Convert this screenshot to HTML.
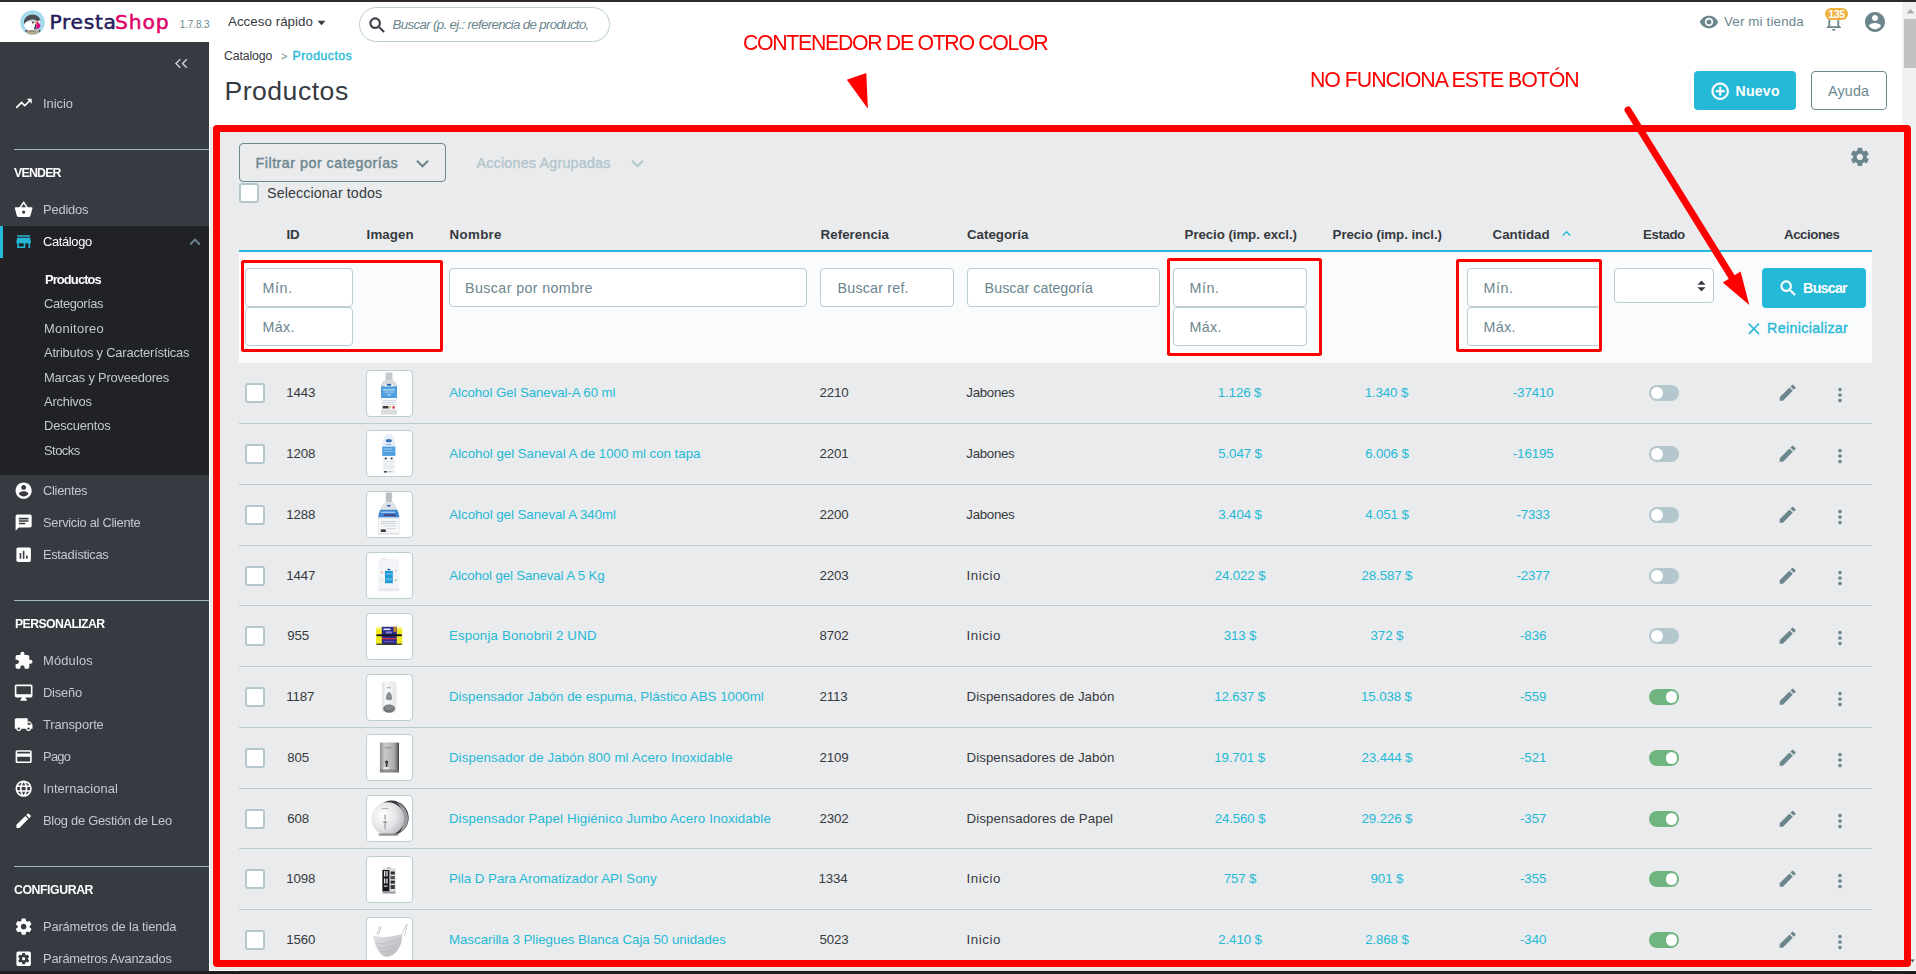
<!DOCTYPE html>
<html lang="es"><head><meta charset="utf-8"><title>Productos • PrestaShop</title>
<style>
html,body{margin:0;padding:0}
body{width:1916px;height:974px;overflow:hidden;position:relative;background:#fff;font-family:"Liberation Sans", sans-serif;}
#pg{position:absolute;left:0;top:0;width:1916px;height:974px;overflow:hidden}
#pg div,#pg svg,#pg span.t{position:absolute;box-sizing:border-box}
span.t{white-space:nowrap;line-height:1;}
</style></head>
<body><div id="pg">
<div style="left:1902px;top:2px;width:14px;height:968px;background:#f1f1f1"></div>
<svg style="left:1910px;top:959px" width="5" height="4" viewBox="0 0 5 4"><path fill="#505050" d="M0.5 0.5h4L2.500 3.500z"/></svg>
<div style="left:1904px;top:19px;width:12px;height:49px;background:#c1c1c1"></div>
<svg style="left:1906px;top:8px" width="9" height="6" viewBox="0 0 9 6"><path fill="#a9a9a9" d="M0.5 5.5L4.5 1L8.500 5.500z"/></svg>
<div style="left:0px;top:0px;width:1916px;height:2px;background:#2b2b2e"></div>
<div style="left:0px;top:971px;width:1916px;height:3px;background:#1d1d1e"></div>
<svg style="left:19.5px;top:9.5px" width="25" height="25" viewBox="0 0 25 25">
<defs><clipPath id="lc"><circle cx="12.400" cy="13" r="8.700"/></clipPath></defs>
<circle cx="12.500" cy="12.500" r="12.300" fill="#a4dcec"/>
<g clip-path="url(#lc)">
<path d="M3.500 14.500C3.500 7 8 4.200 12.500 4.200c4.500 0 7.500 2.800 8.200 6.300L17.500 11.500C15 8.500 9 8.500 4.500 14.500z" fill="#4b4f54"/>
<path d="M4.500 14.500C6 9.500 13 8.300 17.500 11.500L16 14z" fill="#c5c9cd"/>
<path d="M4.300 14C6 11.500 10 11 13 12c2 .700 3 2.500 2.500 4.500l-1 4.300H6C4.500 19 3.800 16.500 4.300 14z" fill="#fff"/>
<path d="M17.500 10.800l2.300-.600 1 2.300-1.500 1z" fill="#eceef0"/>
<circle cx="12.900" cy="12.600" r="0.850" fill="#111"/>
<path d="M15.800 10.500l.900.300-.400 3.900-.900-.300z" fill="#f5a623"/>
<path d="M15.400 14.300l.900.400-1 5-1.300-.400z" fill="#17181a"/>
<path d="M11 15.500l1.500 1.500-.500.500z" fill="#9aa0a6"/>
<polygon points="16.900,11 21.900,17 16.200,19.600" fill="#e5007d"/>
</g>
<path d="M5.200 21.300C7 20 18 20 20 21.300c-1 1.800-4 3.200-7.400 3.200s-6.400-1.400-7.400-3.200z" fill="#b8a88c"/>
<path d="M5 21l1.800-1.800 1 1.300-1.500 1.700zM18.300 20.300l1.500-.800.800 1.800-1.500.900z" fill="#55585c"/>
<rect x="9" y="20.700" width="5.500" height="0.700" fill="#55585c"/>
</svg>
<span class="t" style="left:49.60px;top:12px;font-size:20.3px;color:#251b5b;letter-spacing:0.628px;font-family:'DejaVu Sans',sans-serif;-webkit-text-stroke:0.5px #251b5b;">Presta</span>
<span class="t" style="left:115.00px;top:12px;font-size:20.3px;color:#df0067;letter-spacing:0.888px;font-family:'DejaVu Sans',sans-serif;-webkit-text-stroke:0.5px #df0067;">Shop</span>
<span class="t" style="left:179.70px;top:20px;font-size:10px;color:#6c868e;letter-spacing:-0.120px;">1.7.8.3</span>
<span class="t" style="left:228.00px;top:15px;font-size:13.3px;color:#363a41;letter-spacing:0.053px;">Acceso rápido</span>
<svg style="left:317px;top:20px" width="9" height="6" viewBox="0 0 9 6"><path fill="#363a41" d="M0.5 0.8h8L4.500 5.200z"/></svg>
<div style="left:359px;top:7px;width:251px;height:35px;border:1px solid #bbcdd2;border-radius:18px;background:#fff"></div>
<svg style="left:367.4px;top:14.9px" width="20.6" height="20.6" viewBox="0 0 24 24"><path fill="#363a41" stroke="#363a41" stroke-width="0.4" d="M15.500 14h-.790l-.280-.270C15.410 12.590 16 11.110 16 9.500 16 5.910 13.090 3 9.500 3S3 5.910 3 9.500 5.910 16 9.500 16c1.610 0 3.090-.590 4.230-1.570l.270.280v.790l5 4.990L20.490 19l-4.990-5zm-6 0C7.010 14 5 11.990 5 9.500S7.010 5 9.500 5 14 7.010 14 9.500 11.990 14 9.500 14z"/></svg>
<span class="t" style="left:392.60px;top:18px;font-size:13.3px;color:#6c868e;font-style:italic;letter-spacing:-0.678px;">Buscar (p. ej.: referencia de producto,</span>
<svg style="left:1699.2px;top:12px" width="20" height="20" viewBox="0 0 24 24"><path fill="#6c868e" d="M12 4.500C7 4.500 2.730 7.610 1 12c1.730 4.390 6 7.500 11 7.500s9.270-3.110 11-7.500c-1.730-4.390-6-7.500-11-7.500zM12 17c-2.760 0-5-2.240-5-5s2.240-5 5-5 5 2.240 5 5-2.240 5-5 5zm0-8c-1.660 0-3 1.340-3 3s1.340 3 3 3 3-1.340 3-3-1.340-3-3-3z"/></svg>
<span class="t" style="left:1724.00px;top:15px;font-size:13.3px;color:#6c868e;letter-spacing:0.174px;">Ver mi tienda</span>
<svg style="left:1823px;top:11.2px" width="21.6" height="21.6" viewBox="0 0 24 24"><path fill="#6c868e" d="M12 22c1.100 0 2-.900 2-2h-4c0 1.100.900 2 2 2zm6-6v-5c0-3.070-1.630-5.640-4.500-6.320V4c0-.830-.670-1.500-1.500-1.500s-1.500.670-1.500 1.500v.680C7.640 5.360 6 7.920 6 11v5l-2 2v1h16v-1l-2-2zm-2 1H8v-6c0-2.480 1.510-4.500 4-4.500s4 2.020 4 4.500v6z"/></svg>
<div style="left:1825px;top:8px;width:23px;height:11.5px;background:#efb03e;border-radius:6px"></div>
<span class="t" style="left:1828.25px;top:9px;font-size:10.8px;color:#fff;font-weight:700;letter-spacing:-0.550px;">135</span>
<svg style="left:1863px;top:9.8px" width="24" height="24" viewBox="0 0 24 24"><path fill="#6c868e" d="M12 2C6.48 2 2 6.48 2 12s4.48 10 10 10 10-4.48 10-10S17.52 2 12 2zm0 3c1.66 0 3 1.34 3 3s-1.34 3-3 3-3-1.34-3-3 1.34-3 3-3zm0 14.2c-2.5 0-4.71-1.28-6-3.22.03-1.99 4-3.08 6-3.08 1.99 0 5.97 1.09 6 3.08-1.29 1.94-3.5 3.22-6 3.22z"/></svg>
<span class="t" style="left:224.00px;top:50px;font-size:12.3px;color:#363a41;letter-spacing:-0.126px;">Catalogo</span>
<span class="t" style="left:281.00px;top:51px;font-size:11px;color:#6c868e;">&gt;</span>
<span class="t" style="left:292.60px;top:50px;font-size:12.3px;color:#25b9d7;letter-spacing:0.473px;-webkit-text-stroke:0.35px #25b9d7;">Productos</span>
<span class="t" style="left:224.40px;top:78px;font-size:26.6px;color:#363a41;letter-spacing:0.508px;">Productos</span>
<div style="left:1694px;top:71px;width:102px;height:39px;background:#25b9d7;border-radius:4px"></div>
<svg style="left:1710.3px;top:80.5px" width="20.4" height="20.4" viewBox="0 0 24 24"><path fill="#fff" stroke="#fff" stroke-width="0.6" d="M13 7h-2v4H7v2h4v4h2v-4h4v-2h-4V7zm-1-5C6.480 2 2 6.480 2 12s4.480 10 10 10 10-4.480 10-10S17.520 2 12 2zm0 18c-4.410 0-8-3.590-8-8s3.590-8 8-8 8 3.590 8 8-3.590 8-8 8z"/></svg>
<span class="t" style="left:1735.60px;top:84px;font-size:14px;color:#fff;font-weight:700;letter-spacing:0.266px;">Nuevo</span>
<div style="left:1811px;top:71px;width:76px;height:39px;border:1px solid #6c868e;border-radius:4px;background:#fff"></div>
<span class="t" style="left:1828.00px;top:84px;font-size:14.3px;color:#6c868e;letter-spacing:0.168px;">Ayuda</span>
<div style="left:0px;top:42px;width:209px;height:929px;background:#363a41"></div>
<div style="left:0px;top:226px;width:209px;height:249px;background:#202226"></div>
<div style="left:0px;top:226px;width:3px;height:32px;background:#25b9d7"></div>
<svg style="left:174px;top:58px" width="15" height="11" viewBox="0 0 15 11"><path d="M6.300 1.200L2 5.500l4.300 4.300M12.800 1.200L8.500 5.500l4.300 4.300" fill="none" stroke="#c9ced2" stroke-width="1.500"/></svg>
<div style="left:14px;top:149px;width:195px;height:1px;background:#a3b7be"></div>
<div style="left:14px;top:600px;width:195px;height:1px;background:#a3b7be"></div>
<div style="left:14px;top:866px;width:195px;height:1px;background:#a3b7be"></div>
<svg style="left:14px;top:93.85px" width="19.3" height="19.3" viewBox="0 0 24 24"><path fill="#fff" d="M16 6l2.29 2.29-4.88 4.88-4-4L2 16.59 3.41 18l6-6 4 4 6.3-6.29L22 12V6z"/></svg>
<span class="t" style="left:43.00px;top:98px;font-size:12.9px;color:#c3c9ce;letter-spacing:-0.025px;will-change:transform;">Inicio</span>
<span class="t" style="left:14.00px;top:167px;font-size:12.3px;color:#fff;font-weight:700;letter-spacing:-0.753px;will-change:transform;">VENDER</span>
<svg style="left:14px;top:199.74999999999997px" width="19.3" height="19.3" viewBox="0 0 24 24"><path fill="#fff" d="M17.21 9l-4.38-6.56c-.19-.28-.51-.42-.83-.42-.32 0-.64.14-.83.43L6.79 9H2c-.55 0-1 .45-1 1 0 .09.01.18.04.27l2.54 9.27c.23.84 1 1.46 1.92 1.46h13c.92 0 1.69-.62 1.93-1.46l2.54-9.27L23 10c0-.55-.45-1-1-1h-4.79zM9 9l3-4.4L15 9H9zm3 8c-1.1 0-2-.9-2-2s.9-2 2-2 2 .9 2 2-.9 2-2 2z"/></svg>
<span class="t" style="left:43.00px;top:204px;font-size:12.9px;color:#c3c9ce;letter-spacing:-0.173px;will-change:transform;">Pedidos</span>
<svg style="left:14px;top:231.85px" width="19.3" height="19.3" viewBox="0 0 24 24"><path fill="#25b9d7" d="M20 4H4v2h16V4zm1 10v-2l-1-5H4l-1 5v2h1v6h10v-6h4v6h2v-6h1zm-9 4H6v-4h6v4z"/></svg>
<span class="t" style="left:43.40px;top:236px;font-size:12.9px;color:#fff;letter-spacing:-0.347px;will-change:transform;">Catálogo</span>
<svg style="left:183.5px;top:231px" width="22" height="22" viewBox="0 0 24 24"><path fill="#6c868e" d="M7.410 15.410L12 10.830l4.590 4.580L18 14l-6-6-6 6z"/></svg>
<span class="t" style="left:44.50px;top:274px;font-size:12.9px;color:#fff;font-weight:700;letter-spacing:-0.872px;will-change:transform;">Productos</span>
<span class="t" style="left:43.90px;top:298px;font-size:12.9px;color:#c3c9ce;letter-spacing:-0.390px;will-change:transform;">Categorías</span>
<span class="t" style="left:43.50px;top:323px;font-size:12.9px;color:#c3c9ce;letter-spacing:0.281px;will-change:transform;">Monitoreo</span>
<span class="t" style="left:43.90px;top:347px;font-size:12.9px;color:#c3c9ce;letter-spacing:-0.188px;will-change:transform;">Atributos y Características</span>
<span class="t" style="left:43.50px;top:372px;font-size:12.9px;color:#c3c9ce;letter-spacing:-0.201px;will-change:transform;">Marcas y Proveedores</span>
<span class="t" style="left:43.90px;top:396px;font-size:12.9px;color:#c3c9ce;letter-spacing:-0.212px;will-change:transform;">Archivos</span>
<span class="t" style="left:43.50px;top:420px;font-size:12.9px;color:#c3c9ce;letter-spacing:-0.147px;will-change:transform;">Descuentos</span>
<span class="t" style="left:43.90px;top:445px;font-size:12.9px;color:#c3c9ce;letter-spacing:-0.508px;will-change:transform;">Stocks</span>
<svg style="left:14px;top:480.65000000000003px" width="19.3" height="19.3" viewBox="0 0 24 24"><path fill="#fff" d="M12 2C6.48 2 2 6.48 2 12s4.48 10 10 10 10-4.48 10-10S17.52 2 12 2zm0 3c1.66 0 3 1.34 3 3s-1.34 3-3 3-3-1.34-3-3 1.34-3 3-3zm0 14.2c-2.5 0-4.71-1.28-6-3.22.03-1.99 4-3.08 6-3.08 1.99 0 5.97 1.09 6 3.08-1.29 1.94-3.5 3.22-6 3.22z"/></svg>
<span class="t" style="left:43.40px;top:485px;font-size:12.9px;color:#c3c9ce;letter-spacing:-0.289px;will-change:transform;">Clientes</span>
<svg style="left:14px;top:512.7500000000001px" width="19.3" height="19.3" viewBox="0 0 24 24"><path fill="#fff" d="M20 2H4c-1.1 0-1.99.9-1.99 2L2 22l4-4h14c1.1 0 2-.9 2-2V4c0-1.1-.9-2-2-2zM6 9h12v2H6V9zm8 5H6v-2h8v2zm4-6H6V6h12v2z"/></svg>
<span class="t" style="left:43.40px;top:517px;font-size:12.9px;color:#c3c9ce;letter-spacing:-0.300px;will-change:transform;">Servicio al Cliente</span>
<svg style="left:14px;top:544.7500000000001px" width="19.3" height="19.3" viewBox="0 0 24 24"><path fill="#fff" d="M19 3H5c-1.1 0-2 .9-2 2v14c0 1.1.9 2 2 2h14c1.1 0 2-.9 2-2V5c0-1.1-.9-2-2-2zM9 17H7v-7h2v7zm4 0h-2V7h2v10zm4 0h-2v-4h2v4z"/></svg>
<span class="t" style="left:43.00px;top:549px;font-size:12.9px;color:#c3c9ce;letter-spacing:-0.341px;will-change:transform;">Estadísticas</span>
<span class="t" style="left:14.60px;top:618px;font-size:12.3px;color:#fff;font-weight:700;letter-spacing:-0.630px;will-change:transform;">PERSONALIZAR</span>
<svg style="left:14px;top:650.7500000000001px" width="19.3" height="19.3" viewBox="0 0 24 24"><path fill="#fff" d="M20.5 11H19V7c0-1.1-.9-2-2-2h-4V3.500C13 2.120 11.880 1 10.500 1S8 2.120 8 3.500V5H4c-1.100 0-1.990.900-1.990 2v3.800H3.500c1.490 0 2.700 1.210 2.700 2.700s-1.210 2.700-2.700 2.700H2V20c0 1.100.900 2 2 2h3.800v-1.500c0-1.490 1.210-2.700 2.700-2.700 1.490 0 2.700 1.210 2.700 2.700V22H17c1.100 0 2-.900 2-2v-4h1.500c1.380 0 2.500-1.120 2.500-2.500S21.880 11 20.500 11z"/></svg>
<span class="t" style="left:43.00px;top:655px;font-size:12.9px;color:#c3c9ce;letter-spacing:0.170px;will-change:transform;">Módulos</span>
<svg style="left:14px;top:682.7500000000001px" width="19.3" height="19.3" viewBox="0 0 24 24"><path fill="#fff" d="M21 2H3c-1.100 0-2 .900-2 2v12c0 1.100.900 2 2 2h7l-2 3v1h8v-1l-2-3h7c1.100 0 2-.900 2-2V4c0-1.100-.900-2-2-2zm0 12H3V4h18v10z"/></svg>
<span class="t" style="left:43.00px;top:687px;font-size:12.9px;color:#c3c9ce;letter-spacing:-0.211px;will-change:transform;">Diseño</span>
<svg style="left:14px;top:714.7500000000001px" width="19.3" height="19.3" viewBox="0 0 24 24"><path fill="#fff" d="M20 8h-3V4H3c-1.100 0-2 .900-2 2v11h2c0 1.660 1.340 3 3 3s3-1.340 3-3h6c0 1.660 1.340 3 3 3s3-1.340 3-3h2v-5l-3-4zM6 18.500c-.830 0-1.500-.670-1.500-1.500s.670-1.500 1.500-1.500 1.500.670 1.500 1.500-.670 1.500-1.500 1.500zm13.500-9l1.960 2.500H17V9.500h2.500zm-1.500 9c-.830 0-1.500-.670-1.500-1.500s.670-1.500 1.500-1.500 1.500.670 1.500 1.500-.670 1.500-1.500 1.500z"/></svg>
<span class="t" style="left:43.40px;top:719px;font-size:12.9px;color:#c3c9ce;letter-spacing:-0.120px;will-change:transform;">Transporte</span>
<svg style="left:14px;top:746.7500000000001px" width="19.3" height="19.3" viewBox="0 0 24 24"><path fill="#fff" d="M20 4H4c-1.110 0-1.990.890-1.990 2L2 18c0 1.110.890 2 2 2h16c1.110 0 2-.890 2-2V6c0-1.110-.890-2-2-2zm0 14H4v-6h16v6zm0-10H4V6h16v2z"/></svg>
<span class="t" style="left:43.00px;top:751px;font-size:12.9px;color:#c3c9ce;letter-spacing:-0.712px;will-change:transform;">Pago</span>
<svg style="left:14px;top:778.7500000000001px" width="19.3" height="19.3" viewBox="0 0 24 24"><path fill="#fff" d="M11.990 2C6.470 2 2 6.480 2 12s4.470 10 9.990 10C17.520 22 22 17.520 22 12S17.520 2 11.990 2zm6.930 6h-2.950c-.320-1.250-.780-2.450-1.380-3.560 1.840.630 3.370 1.910 4.330 3.560zM12 4.040c.830 1.200 1.480 2.530 1.910 3.960h-3.820c.430-1.430 1.080-2.760 1.910-3.960zM4.260 14C4.100 13.360 4 12.690 4 12s.100-1.360.260-2h3.380c-.080.660-.140 1.320-.140 2 0 .680.060 1.340.140 2H4.260zm.820 2h2.950c.320 1.250.780 2.450 1.380 3.560-1.840-.630-3.370-1.900-4.330-3.560zm2.950-8H5.080c.960-1.660 2.490-2.930 4.330-3.560C8.810 5.550 8.350 6.750 8.030 8zM12 19.960c-.830-1.200-1.480-2.530-1.910-3.960h3.820c-.430 1.430-1.080 2.760-1.910 3.960zM14.340 14H9.660c-.090-.660-.160-1.320-.160-2 0-.680.070-1.350.160-2h4.680c.090.650.160 1.320.160 2 0 .680-.070 1.340-.160 2zm.250 5.560c.600-1.110 1.060-2.310 1.380-3.560h2.950c-.960 1.650-2.490 2.930-4.330 3.560zM16.360 14c.080-.660.140-1.320.140-2 0-.680-.060-1.340-.140-2h3.380c.160.640.260 1.310.260 2s-.100 1.360-.260 2h-3.380z"/></svg>
<span class="t" style="left:43.00px;top:783px;font-size:12.9px;color:#c3c9ce;letter-spacing:0.079px;will-change:transform;">Internacional</span>
<svg style="left:14px;top:810.7500000000001px" width="19.3" height="19.3" viewBox="0 0 24 24"><path fill="#fff" d="M3 17.250V21h3.750L17.810 9.940l-3.750-3.750L3 17.250zM20.710 7.040c.390-.390.390-1.020 0-1.410l-2.340-2.340c-.390-.390-1.020-.390-1.410 0l-1.830 1.830 3.750 3.750 1.830-1.830z"/></svg>
<span class="t" style="left:43.00px;top:815px;font-size:12.9px;color:#c3c9ce;letter-spacing:-0.270px;will-change:transform;">Blog de Gestión de Leo</span>
<span class="t" style="left:14.00px;top:884px;font-size:12.3px;color:#fff;font-weight:700;letter-spacing:-0.429px;will-change:transform;">CONFIGURAR</span>
<svg style="left:14px;top:916.7500000000001px" width="19.3" height="19.3" viewBox="0 0 24 24"><path fill="#fff" d="M19.430 12.980c.040-.320.070-.640.070-.980s-.030-.660-.070-.980l2.110-1.650c.190-.150.240-.420.120-.640l-2-3.460c-.120-.220-.390-.300-.610-.220l-2.490 1c-.520-.400-1.080-.730-1.690-.980l-.380-2.650C14.460 2.180 14.250 2 14 2h-4c-.250 0-.460.180-.490.420l-.380 2.650c-.610.250-1.170.590-1.690.980l-2.490-1c-.230-.090-.490 0-.610.220l-2 3.460c-.130.220-.070.490.120.640l2.110 1.650c-.040.320-.070.650-.070.980s.030.660.070.980l-2.110 1.650c-.190.150-.240.420-.120.640l2 3.460c.120.220.390.300.610.220l2.490-1c.520.400 1.080.730 1.690.980l.380 2.650c.030.240.240.420.490.420h4c.250 0 .460-.180.490-.420l.380-2.650c.610-.250 1.170-.590 1.690-.980l2.490 1c.230.090.490 0 .610-.220l2-3.460c.120-.220.070-.490-.120-.640l-2.110-1.650zM12 15.500c-1.930 0-3.500-1.570-3.500-3.500s1.570-3.500 3.500-3.500 3.500 1.570 3.500 3.500-1.570 3.500-3.500 3.500z"/></svg>
<span class="t" style="left:43.00px;top:921px;font-size:12.9px;color:#c3c9ce;letter-spacing:-0.154px;will-change:transform;">Parámetros de la tienda</span>
<svg style="left:14px;top:948.7500000000001px" width="19.3" height="19.3" viewBox="0 0 24 24"><path fill="#fff" d="M12 10c-1.100 0-2 .900-2 2s.900 2 2 2 2-.900 2-2-.900-2-2-2zm7-7H5c-1.110 0-2 .900-2 2v14c0 1.100.890 2 2 2h14c1.110 0 2-.900 2-2V5c0-1.100-.890-2-2-2zm-1.750 9c0 .230-.020.460-.050.680l1.480 1.160c.130.110.170.300.080.450l-1.400 2.420c-.090.150-.270.210-.430.150l-1.740-.700c-.360.280-.760.510-1.180.690l-.260 1.850c-.030.170-.180.300-.350.300h-2.800c-.170 0-.320-.130-.350-.290l-.260-1.850c-.430-.180-.820-.410-1.180-.690l-1.740.700c-.160.060-.340 0-.430-.150l-1.400-2.420c-.090-.150-.050-.340.080-.450l1.480-1.160c-.030-.230-.050-.460-.050-.690 0-.230.020-.460.050-.680l-1.480-1.160c-.130-.110-.170-.300-.080-.450l1.400-2.420c.090-.150.270-.210.430-.150l1.740.700c.360-.280.760-.510 1.180-.690l.260-1.850c.030-.170.180-.300.350-.300h2.800c.170 0 .320.130.350.290l.260 1.850c.430.180.820.410 1.180.690l1.740-.700c.160-.060.340 0 .430.150l1.400 2.420c.090.150.050.340-.080.450l-1.480 1.160c.030.230.050.460.050.690z"/></svg>
<span class="t" style="left:43.00px;top:953px;font-size:12.9px;color:#c3c9ce;letter-spacing:-0.221px;will-change:transform;">Parámetros Avanzados</span>
<div style="left:210px;top:127px;width:1692px;height:843px;background:#eaebec"></div>
<div style="left:209px;top:970px;width:1707px;height:1px;background:#fff"></div>
<div style="left:239px;top:970px;width:1633px;height:1px;background:#d3e1e6"></div>
<div style="left:213px;top:125px;width:1698px;height:842px;background:#eaebec;border-radius:4px"></div>
<div style="left:239px;top:143px;width:207px;height:38.5px;border:1px solid #6c868e;border-radius:4px"></div>
<span class="t" style="left:255.60px;top:156px;font-size:14.3px;color:#6c868e;letter-spacing:0.488px;-webkit-text-stroke:0.4px #6c868e;">Filtrar por categorías</span>
<svg style="left:410.3px;top:151.1px" width="25" height="25" viewBox="0 0 24 24"><path fill="#6c868e" d="M7.410 8.590L12 13.170l4.590-4.580L18 10l-6 6-6-6 1.410-1.410z"/></svg>
<span class="t" style="left:476.50px;top:156px;font-size:14.3px;color:#b3c7cd;letter-spacing:0.207px;-webkit-text-stroke:0.4px #b3c7cd;">Acciones Agrupadas</span>
<svg style="left:624.8px;top:151.1px" width="25" height="25" viewBox="0 0 24 24"><path fill="#b3c7cd" d="M7.410 8.590L12 13.170l4.590-4.580L18 10l-6 6-6-6 1.410-1.410z"/></svg>
<svg style="left:1848.9px;top:146.1px" width="21.8" height="21.8" viewBox="0 0 24 24"><path fill="#6c868e" d="M19.430 12.980c.040-.320.070-.640.070-.980s-.030-.660-.070-.980l2.110-1.650c.190-.150.240-.420.120-.640l-2-3.460c-.120-.220-.390-.300-.610-.220l-2.490 1c-.520-.400-1.080-.730-1.690-.980l-.380-2.650C14.460 2.180 14.250 2 14 2h-4c-.250 0-.460.180-.490.420l-.380 2.650c-.610.250-1.170.590-1.690.980l-2.490-1c-.230-.090-.490 0-.610.220l-2 3.460c-.130.220-.070.490.120.640l2.110 1.650c-.040.320-.070.650-.070.980s.030.660.070.980l-2.110 1.650c-.190.150-.240.420-.120.640l2 3.460c.120.220.390.300.610.220l2.490-1c.520.400 1.080.730 1.690.980l.380 2.650c.030.240.240.420.490.420h4c.250 0 .460-.180.490-.420l.380-2.650c.610-.250 1.170-.590 1.690-.980l2.490 1c.230.090.490 0 .610-.220l2-3.460c.120-.220.070-.490-.120-.640l-2.110-1.650zM12 15.500c-1.930 0-3.500-1.570-3.500-3.500s1.570-3.500 3.500-3.500 3.500 1.570 3.500 3.500-1.570 3.500-3.500 3.500z"/></svg>
<div style="left:239px;top:182.5px;width:20px;height:20px;border:2px solid #b3c7cd;border-radius:3px;background:#fff"></div>
<span class="t" style="left:267.00px;top:186px;font-size:14.3px;color:#363a41;letter-spacing:0.094px;">Seleccionar todos</span>
<span class="t" style="left:286.60px;top:228px;font-size:13.3px;color:#363a41;font-weight:700;letter-spacing:-0.194px;">ID</span>
<span class="t" style="left:366.60px;top:228px;font-size:13.3px;color:#363a41;font-weight:700;letter-spacing:0.114px;">Imagen</span>
<span class="t" style="left:449.60px;top:228px;font-size:13.3px;color:#363a41;font-weight:700;letter-spacing:0.331px;">Nombre</span>
<span class="t" style="left:820.60px;top:228px;font-size:13.3px;color:#363a41;font-weight:700;letter-spacing:0.044px;">Referencia</span>
<span class="t" style="left:967.00px;top:228px;font-size:13.3px;color:#363a41;font-weight:700;letter-spacing:0.008px;">Categoría</span>
<span class="t" style="left:1184.60px;top:228px;font-size:13.3px;color:#363a41;font-weight:700;letter-spacing:-0.076px;">Precio (imp. excl.)</span>
<span class="t" style="left:1332.60px;top:228px;font-size:13.3px;color:#363a41;font-weight:700;letter-spacing:-0.078px;">Precio (imp. incl.)</span>
<span class="t" style="left:1492.50px;top:228px;font-size:13.3px;color:#363a41;font-weight:700;letter-spacing:0.034px;">Cantidad</span>
<span class="t" style="left:1643.10px;top:228px;font-size:13.3px;color:#363a41;font-weight:700;letter-spacing:-0.442px;">Estado</span>
<span class="t" style="left:1784.00px;top:228px;font-size:13.3px;color:#363a41;font-weight:700;letter-spacing:-0.461px;">Acciones</span>
<svg style="left:1557.7px;top:225.3px" width="17" height="17" viewBox="0 0 24 24"><path fill="#25b9d7" d="M7.410 15.410L12 10.830l4.590 4.580L18 14l-6-6-6 6z"/></svg>
<div style="left:239px;top:250px;width:1633px;height:2px;background:#25b9d7"></div>
<div style="left:239px;top:252px;width:1633px;height:111px;background:#fafbfc"></div>
<div style="left:245px;top:268px;width:108px;height:39px;border:1px solid #bbcdd2;border-radius:4px;background:#fff"></div>
<span class="t" style="left:262.60px;top:281px;font-size:14.3px;color:#6c868e;letter-spacing:0.556px;">Mín.</span>
<div style="left:245px;top:307px;width:108px;height:39px;border:1px solid #bbcdd2;border-radius:4px;background:#fff"></div>
<span class="t" style="left:262.60px;top:320px;font-size:14.3px;color:#6c868e;letter-spacing:0.330px;">Máx.</span>
<div style="left:449px;top:268px;width:357.5px;height:39px;border:1px solid #bbcdd2;border-radius:4px;background:#fff"></div>
<span class="t" style="left:465.10px;top:281px;font-size:14.3px;color:#6c868e;letter-spacing:0.367px;">Buscar por nombre</span>
<div style="left:820px;top:268px;width:134px;height:39px;border:1px solid #bbcdd2;border-radius:4px;background:#fff"></div>
<span class="t" style="left:837.60px;top:281px;font-size:14.3px;color:#6c868e;letter-spacing:0.185px;">Buscar ref.</span>
<div style="left:967px;top:268px;width:193px;height:39px;border:1px solid #bbcdd2;border-radius:4px;background:#fff"></div>
<span class="t" style="left:984.60px;top:281px;font-size:14.3px;color:#6c868e;letter-spacing:0.025px;">Buscar categoría</span>
<div style="left:1173px;top:268px;width:134px;height:39px;border:1px solid #bbcdd2;border-radius:4px;background:#fff"></div>
<span class="t" style="left:1189.60px;top:281px;font-size:14.3px;color:#6c868e;letter-spacing:0.556px;">Mín.</span>
<div style="left:1173px;top:307px;width:134px;height:39px;border:1px solid #bbcdd2;border-radius:4px;background:#fff"></div>
<span class="t" style="left:1189.60px;top:320px;font-size:14.3px;color:#6c868e;letter-spacing:0.330px;">Máx.</span>
<div style="left:1467px;top:268px;width:134px;height:39px;border:1px solid #bbcdd2;border-radius:4px;background:#fff"></div>
<span class="t" style="left:1483.60px;top:281px;font-size:14.3px;color:#6c868e;letter-spacing:0.556px;">Mín.</span>
<div style="left:1467px;top:307px;width:134px;height:39px;border:1px solid #bbcdd2;border-radius:4px;background:#fff"></div>
<span class="t" style="left:1483.60px;top:320px;font-size:14.3px;color:#6c868e;letter-spacing:0.330px;">Máx.</span>
<div style="left:1614px;top:268px;width:99.5px;height:34.5px;border:1px solid #bbcdd2;border-radius:4px;background:#fff"></div>
<svg style="left:1697px;top:280px" width="9" height="12" viewBox="0 0 9 12"><path fill="#363a41" d="M0.500 4.800L4.500 0.500l4 4.300zM0.500 7.200L4.500 11.500l4-4.300z"/></svg>
<div style="left:1762px;top:268px;width:104px;height:39.5px;background:#25b9d7;border-radius:4px"></div>
<svg style="left:1777.9px;top:278.1px" width="20.6" height="20.6" viewBox="0 0 24 24"><path fill="#fff" stroke="#fff" stroke-width="0.5" d="M15.500 14h-.790l-.280-.270C15.410 12.590 16 11.110 16 9.500 16 5.910 13.090 3 9.500 3S3 5.910 3 9.500 5.910 16 9.500 16c1.610 0 3.090-.590 4.230-1.570l.270.280v.790l5 4.990L20.490 19l-4.990-5zm-6 0C7.010 14 5 11.990 5 9.500S7.010 5 9.500 5 14 7.010 14 9.500 11.990 14 9.500 14z"/></svg>
<span class="t" style="left:1803.10px;top:281px;font-size:14.3px;color:#fff;font-weight:700;letter-spacing:-0.782px;">Buscar</span>
<svg style="left:1744.1px;top:319.1px" width="19.7" height="19.7" viewBox="0 0 24 24"><path fill="#25b9d7" d="M19 6.410L17.590 5 12 10.590 6.410 5 5 6.410 10.590 12 5 17.590 6.410 19 12 13.410 17.590 19 19 17.590 13.410 12z"/></svg>
<span class="t" style="left:1767.10px;top:321px;font-size:14.3px;color:#25b9d7;letter-spacing:0.308px;-webkit-text-stroke:0.35px #25b9d7;">Reinicializar</span>
<div style="left:239px;top:423px;width:1633px;height:1px;background:#bbcdd2"></div>
<div style="left:245px;top:383px;width:19.5px;height:19.5px;border:2px solid #b3c7cd;border-radius:3px;background:#fff"></div>
<span class="t" style="left:286.20px;top:386px;font-size:13.3px;color:#363a41;letter-spacing:-0.120px;">1443</span>
<div style="left:366px;top:370px;width:47px;height:47px;border:1px solid #bbcdd2;border-radius:4px;background:#fff;overflow:hidden"><svg style="left:0;top:0" width="45" height="45" viewBox="0 0 45 45"><rect x="18.500" y="1.500" width="7" height="8.500" rx="0.800" fill="#c6c9cc"/>
<path d="M14 43.400V16c0-4 2.500-6.500 5-6.900h6c2.500.400 5 2.900 5 6.900v27.400z" fill="#d8dadc"/>
<rect x="14" y="15.300" width="16" height="11.700" fill="#4d9ede"/>
<path d="M17 15.300c1.500-3.300 8.500-3.300 10 0z" fill="#fff"/><ellipse cx="22" cy="13.800" rx="2.600" ry="1.100" fill="#2f66b3"/>
<rect x="16" y="18.200" width="12" height="1.200" fill="#c4def4"/><rect x="16.500" y="20.600" width="11" height="0.900" fill="#b0d3f0"/><rect x="20" y="23" width="4" height="1.600" fill="#9fc9ee"/>
<rect x="14" y="27" width="16" height="11.700" fill="#f4f6f8"/>
<rect x="15.500" y="29" width="13" height="0.700" fill="#c8ccd0"/><rect x="15.500" y="31" width="13" height="0.700" fill="#c8ccd0"/><rect x="15.500" y="33" width="13" height="0.700" fill="#d0d4d8"/>
<rect x="15.700" y="35" width="5.800" height="2.500" fill="#3a3a3e"/><rect x="22.400" y="35.300" width="1.500" height="2" fill="#d8b53a"/><circle cx="26.600" cy="36.400" r="1.300" fill="#e0404a"/></svg></div>
<span class="t" style="left:449.30px;top:386px;font-size:13.3px;color:#25b9d7;letter-spacing:-0.088px;">Alcohol Gel Saneval-A 60 ml</span>
<span class="t" style="left:819.50px;top:386px;font-size:13.3px;color:#363a41;letter-spacing:-0.120px;">2210</span>
<span class="t" style="left:966.30px;top:386px;font-size:13.3px;color:#363a41;letter-spacing:-0.304px;">Jabones</span>
<span class="t" style="left:1217.78px;top:386px;font-size:13.3px;color:#25b9d7;letter-spacing:-0.120px;">1.126 $</span>
<span class="t" style="left:1364.68px;top:386px;font-size:13.3px;color:#25b9d7;letter-spacing:-0.120px;">1.340 $</span>
<span class="t" style="left:1512.80px;top:386px;font-size:13.3px;color:#25b9d7;letter-spacing:-0.120px;">-37410</span>
<div style="left:1649px;top:385px;width:30px;height:15.5px;background:#b3c7cd;border-radius:8px"></div>
<div style="left:1651px;top:387px;width:11.5px;height:11.5px;background:#fff;border-radius:6px"></div>
<svg style="left:1777.2px;top:381.6px" width="21.3" height="21.3" viewBox="0 0 24 24"><path fill="#6c868e" d="M3 17.250V21h3.750L17.810 9.940l-3.750-3.750L3 17.250zM20.710 7.040c.390-.390.390-1.020 0-1.410l-2.340-2.340c-.390-.390-1.020-.390-1.410 0l-1.830 1.830 3.750 3.750 1.830-1.830z"/></svg>
<svg style="left:1829.3px;top:383.8px" width="22" height="22" viewBox="0 0 24 24"><path fill="#6c868e" d="M12 8c1.100 0 2-.900 2-2s-.900-2-2-2-2 .900-2 2 .900 2 2 2zm0 2c-1.100 0-2 .900-2 2s.900 2 2 2 2-.900 2-2-.900-2-2-2zm0 6c-1.100 0-2 .900-2 2s.900 2 2 2 2-.900 2-2-.900-2-2-2z"/></svg>
<div style="left:239px;top:484px;width:1633px;height:1px;background:#bbcdd2"></div>
<div style="left:245px;top:444px;width:19.5px;height:19.5px;border:2px solid #b3c7cd;border-radius:3px;background:#fff"></div>
<span class="t" style="left:286.20px;top:447px;font-size:13.3px;color:#363a41;letter-spacing:-0.120px;">1208</span>
<div style="left:366px;top:430px;width:47px;height:47px;border:1px solid #bbcdd2;border-radius:4px;background:#fff;overflow:hidden"><svg style="left:0;top:0" width="45" height="45" viewBox="0 0 45 45"><path d="M15 43.400V14c0-5 2-9 4.500-10.700h4.600c2.500 1.700 4.500 5.700 4.500 10.700v29.400z" fill="#f6f8fb"/>
<path d="M15.300 15.600c0-5 2-10 4.200-12h4.600c2.200 2 4.200 7 4.200 12z" fill="#e3eefa"/>
<ellipse cx="21.800" cy="9.700" rx="3" ry="1.600" fill="#3a6fb5"/><rect x="19" y="13" width="5.500" height="1" fill="#7db3e6"/>
<rect x="15.200" y="15.600" width="13.200" height="9.300" fill="#4f9fe0"/><rect x="16.500" y="17.500" width="8" height="1" fill="#a8d0f2"/><rect x="16.500" y="20" width="10" height="0.900" fill="#8fc2ee"/>
<circle cx="18.700" cy="27.500" r="1.100" fill="#3c3f45"/><circle cx="24.600" cy="27.500" r="1.100" fill="#3c3f45"/>
<rect x="16.500" y="30.500" width="10.500" height="0.600" fill="#c9cdd2"/><rect x="16.500" y="32.700" width="10.500" height="0.600" fill="#c9cdd2"/><rect x="16.500" y="35" width="10.500" height="0.600" fill="#c9cdd2"/><rect x="16.500" y="37.300" width="10.500" height="0.600" fill="#d4d8dc"/>
<rect x="17" y="40" width="3" height="1.600" fill="#4a4d52"/><rect x="21" y="40.400" width="5" height="0.800" fill="#aab0b6"/></svg></div>
<span class="t" style="left:449.30px;top:447px;font-size:13.3px;color:#25b9d7;letter-spacing:-0.024px;">Alcohol gel Saneval A de 1000 ml con tapa</span>
<span class="t" style="left:819.50px;top:447px;font-size:13.3px;color:#363a41;letter-spacing:-0.120px;">2201</span>
<span class="t" style="left:966.30px;top:447px;font-size:13.3px;color:#363a41;letter-spacing:-0.304px;">Jabones</span>
<span class="t" style="left:1218.28px;top:447px;font-size:13.3px;color:#25b9d7;letter-spacing:-0.120px;">5.047 $</span>
<span class="t" style="left:1365.18px;top:447px;font-size:13.3px;color:#25b9d7;letter-spacing:-0.120px;">6.006 $</span>
<span class="t" style="left:1512.80px;top:447px;font-size:13.3px;color:#25b9d7;letter-spacing:-0.120px;">-16195</span>
<div style="left:1649px;top:446px;width:30px;height:15.5px;background:#b3c7cd;border-radius:8px"></div>
<div style="left:1651px;top:448px;width:11.5px;height:11.5px;background:#fff;border-radius:6px"></div>
<svg style="left:1777.2px;top:442.6px" width="21.3" height="21.3" viewBox="0 0 24 24"><path fill="#6c868e" d="M3 17.250V21h3.750L17.810 9.940l-3.750-3.750L3 17.250zM20.710 7.040c.390-.390.390-1.020 0-1.410l-2.340-2.340c-.390-.390-1.020-.390-1.410 0l-1.830 1.830 3.750 3.750 1.830-1.830z"/></svg>
<svg style="left:1829.3px;top:444.8px" width="22" height="22" viewBox="0 0 24 24"><path fill="#6c868e" d="M12 8c1.100 0 2-.900 2-2s-.900-2-2-2-2 .900-2 2 .900 2 2 2zm0 2c-1.100 0-2 .900-2 2s.900 2 2 2 2-.900 2-2-.900-2-2-2zm0 6c-1.100 0-2 .900-2 2s.900 2 2 2 2-.900 2-2-.900-2-2-2z"/></svg>
<div style="left:239px;top:545px;width:1633px;height:1px;background:#bbcdd2"></div>
<div style="left:245px;top:505px;width:19.5px;height:19.5px;border:2px solid #b3c7cd;border-radius:3px;background:#fff"></div>
<span class="t" style="left:286.20px;top:508px;font-size:13.3px;color:#363a41;letter-spacing:-0.120px;">1288</span>
<div style="left:366px;top:491px;width:47px;height:47px;border:1px solid #bbcdd2;border-radius:4px;background:#fff;overflow:hidden"><svg style="left:0;top:0" width="45" height="45" viewBox="0 0 45 45"><rect x="18.700" y="0.600" width="6.400" height="9.600" fill="#c2c5c8"/><rect x="20" y="0.600" width="0.800" height="9.600" fill="#a9adb1"/><rect x="22.600" y="0.600" width="0.800" height="9.600" fill="#a9adb1"/>
<path d="M11 42.500V26c0-7 4-13 7.700-16.200h6.400C28.800 13 32.500 19 32.500 26v16.500z" fill="#dfe2e5"/>
<path d="M13.500 17.800h16.500c1.300 2.300 2 4.800 2.300 7.400H11.300c.300-2.600 1-5.100 2.200-7.400z" fill="#3f86d2"/>
<ellipse cx="21.800" cy="13.800" rx="2" ry="1" fill="#3569ae"/><rect x="14" y="19.600" width="14" height="1.300" fill="#a9cff1"/><rect x="17" y="22.300" width="12" height="1.700" fill="#4a3f7a"/>
<rect x="11.600" y="26.700" width="20.300" height="14.300" fill="#f5f7f9"/>
<rect x="14" y="29" width="15" height="0.700" fill="#b9bec4"/><rect x="14" y="31.300" width="15" height="0.700" fill="#b9bec4"/><rect x="16" y="33.600" width="13" height="0.700" fill="#c6cacf"/><rect x="20" y="36" width="9" height="0.700" fill="#c6cacf"/>
<rect x="13.800" y="37.400" width="5" height="2.600" fill="#35383d"/></svg></div>
<span class="t" style="left:449.30px;top:508px;font-size:13.3px;color:#25b9d7;letter-spacing:-0.043px;">Alcohol gel Saneval A 340ml</span>
<span class="t" style="left:819.50px;top:508px;font-size:13.3px;color:#363a41;letter-spacing:-0.120px;">2200</span>
<span class="t" style="left:966.30px;top:508px;font-size:13.3px;color:#363a41;letter-spacing:-0.304px;">Jabones</span>
<span class="t" style="left:1218.28px;top:508px;font-size:13.3px;color:#25b9d7;letter-spacing:-0.120px;">3.404 $</span>
<span class="t" style="left:1365.18px;top:508px;font-size:13.3px;color:#25b9d7;letter-spacing:-0.120px;">4.051 $</span>
<span class="t" style="left:1516.43px;top:508px;font-size:13.3px;color:#25b9d7;letter-spacing:-0.120px;">-7333</span>
<div style="left:1649px;top:507px;width:30px;height:15.5px;background:#b3c7cd;border-radius:8px"></div>
<div style="left:1651px;top:509px;width:11.5px;height:11.5px;background:#fff;border-radius:6px"></div>
<svg style="left:1777.2px;top:503.6px" width="21.3" height="21.3" viewBox="0 0 24 24"><path fill="#6c868e" d="M3 17.250V21h3.750L17.810 9.940l-3.750-3.750L3 17.250zM20.710 7.040c.390-.390.390-1.020 0-1.410l-2.340-2.340c-.390-.390-1.020-.390-1.410 0l-1.830 1.830 3.750 3.750 1.830-1.830z"/></svg>
<svg style="left:1829.3px;top:505.8px" width="22" height="22" viewBox="0 0 24 24"><path fill="#6c868e" d="M12 8c1.100 0 2-.900 2-2s-.900-2-2-2-2 .900-2 2 .900 2 2 2zm0 2c-1.100 0-2 .900-2 2s.900 2 2 2 2-.900 2-2-.900-2-2-2zm0 6c-1.100 0-2 .900-2 2s.900 2 2 2 2-.900 2-2-.900-2-2-2z"/></svg>
<div style="left:239px;top:605px;width:1633px;height:1px;background:#bbcdd2"></div>
<div style="left:245px;top:566px;width:19.5px;height:19.5px;border:2px solid #b3c7cd;border-radius:3px;background:#fff"></div>
<span class="t" style="left:286.20px;top:569px;font-size:13.3px;color:#363a41;letter-spacing:-0.120px;">1447</span>
<div style="left:366px;top:552px;width:47px;height:47px;border:1px solid #bbcdd2;border-radius:4px;background:#fff;overflow:hidden"><svg style="left:0;top:0" width="45" height="45" viewBox="0 0 45 45"><path d="M11.300 38.200V10.500c0-2 1.200-3.400 3-3.900l5-.500h9l3 1.800c.700.600 1 1.400 1 2.600v27.700z" fill="#f3f4f7"/>
<rect x="11.300" y="35.500" width="21" height="2.700" fill="#e6e8ec"/><rect x="14" y="4.800" width="5" height="2.200" rx="0.500" fill="#eceef1"/>
<rect x="18" y="17.800" width="7.800" height="12.400" fill="#1f9ad8"/><path d="M19 17.800c.800-2.300 5-2.300 5.800 0z" fill="#fff"/><ellipse cx="21.900" cy="16.600" rx="1.800" ry="0.900" fill="#2b62ad"/>
<rect x="19" y="20.500" width="5.800" height="0.900" fill="#9fd4f2"/><rect x="19" y="25" width="5.800" height="2.500" fill="#4fb2e4"/>
<circle cx="14.800" cy="19.500" r="1.100" fill="#f0b08a"/><circle cx="28.800" cy="17.800" r="1" fill="#f3c3b6"/><circle cx="14.500" cy="27.500" r="0.900" fill="#bfe3d0"/><circle cx="28.800" cy="27.200" r="1.100" fill="#a8d6a0"/></svg></div>
<span class="t" style="left:449.30px;top:569px;font-size:13.3px;color:#25b9d7;letter-spacing:-0.140px;">Alcohol gel Saneval A 5 Kg</span>
<span class="t" style="left:819.50px;top:569px;font-size:13.3px;color:#363a41;letter-spacing:-0.120px;">2203</span>
<span class="t" style="left:966.60px;top:569px;font-size:13.3px;color:#363a41;letter-spacing:0.531px;">Inicio</span>
<span class="t" style="left:1214.64px;top:569px;font-size:13.3px;color:#25b9d7;letter-spacing:-0.120px;">24.022 $</span>
<span class="t" style="left:1361.54px;top:569px;font-size:13.3px;color:#25b9d7;letter-spacing:-0.120px;">28.587 $</span>
<span class="t" style="left:1516.43px;top:569px;font-size:13.3px;color:#25b9d7;letter-spacing:-0.120px;">-2377</span>
<div style="left:1649px;top:568px;width:30px;height:15.5px;background:#b3c7cd;border-radius:8px"></div>
<div style="left:1651px;top:570px;width:11.5px;height:11.5px;background:#fff;border-radius:6px"></div>
<svg style="left:1777.2px;top:564.6px" width="21.3" height="21.3" viewBox="0 0 24 24"><path fill="#6c868e" d="M3 17.250V21h3.750L17.810 9.940l-3.750-3.750L3 17.250zM20.710 7.040c.390-.390.390-1.020 0-1.410l-2.340-2.340c-.390-.390-1.020-.390-1.410 0l-1.830 1.830 3.750 3.750 1.830-1.830z"/></svg>
<svg style="left:1829.3px;top:566.8px" width="22" height="22" viewBox="0 0 24 24"><path fill="#6c868e" d="M12 8c1.100 0 2-.900 2-2s-.900-2-2-2-2 .900-2 2 .900 2 2 2zm0 2c-1.100 0-2 .900-2 2s.900 2 2 2 2-.900 2-2-.900-2-2-2zm0 6c-1.100 0-2 .900-2 2s.900 2 2 2 2-.900 2-2-.900-2-2-2z"/></svg>
<div style="left:239px;top:666px;width:1633px;height:1px;background:#bbcdd2"></div>
<div style="left:245px;top:626px;width:19.5px;height:19.5px;border:2px solid #b3c7cd;border-radius:3px;background:#fff"></div>
<span class="t" style="left:287.20px;top:629px;font-size:13.3px;color:#363a41;letter-spacing:-0.120px;">955</span>
<div style="left:366px;top:613px;width:47px;height:47px;border:1px solid #bbcdd2;border-radius:4px;background:#fff;overflow:hidden"><svg style="left:0;top:0" width="45" height="45" viewBox="0 0 45 45"><rect x="8.900" y="13.500" width="26.400" height="17" rx="1.500" fill="#f2ea25"/>
<rect x="8.900" y="12.800" width="26.400" height="2.500" fill="#fbf7a0" opacity="0.700"/>
<rect x="14.800" y="12.800" width="15" height="18.200" fill="#2c2b8e"/>
<rect x="26.500" y="12.800" width="3" height="5" fill="#c98a2b"/>
<rect x="16.500" y="14.500" width="7" height="1.600" fill="#dfe3f5"/><rect x="19" y="17.500" width="6" height="2" fill="#7f86c9"/>
<rect x="9.500" y="20.300" width="25.300" height="1.900" fill="#14161c"/>
<rect x="15" y="24.100" width="14.500" height="1.200" fill="#e6332e"/>
<rect x="9.500" y="29.600" width="25.300" height="1.300" fill="#3a3c20"/><rect x="17" y="27" width="10" height="1.200" fill="#6a4fb0"/></svg></div>
<span class="t" style="left:448.90px;top:629px;font-size:13.3px;color:#25b9d7;letter-spacing:0.166px;">Esponja Bonobril 2 UND</span>
<span class="t" style="left:819.50px;top:629px;font-size:13.3px;color:#363a41;letter-spacing:-0.120px;">8702</span>
<span class="t" style="left:966.60px;top:629px;font-size:13.3px;color:#363a41;letter-spacing:0.531px;">Inicio</span>
<span class="t" style="left:1223.70px;top:629px;font-size:13.3px;color:#25b9d7;letter-spacing:-0.120px;">313 $</span>
<span class="t" style="left:1370.60px;top:629px;font-size:13.3px;color:#25b9d7;letter-spacing:-0.120px;">372 $</span>
<span class="t" style="left:1520.07px;top:629px;font-size:13.3px;color:#25b9d7;letter-spacing:-0.120px;">-836</span>
<div style="left:1649px;top:628px;width:30px;height:15.5px;background:#b3c7cd;border-radius:8px"></div>
<div style="left:1651px;top:630px;width:11.5px;height:11.5px;background:#fff;border-radius:6px"></div>
<svg style="left:1777.2px;top:624.6px" width="21.3" height="21.3" viewBox="0 0 24 24"><path fill="#6c868e" d="M3 17.250V21h3.750L17.810 9.940l-3.750-3.750L3 17.250zM20.710 7.040c.390-.390.390-1.020 0-1.410l-2.340-2.340c-.390-.390-1.020-.390-1.410 0l-1.830 1.830 3.750 3.750 1.830-1.830z"/></svg>
<svg style="left:1829.3px;top:626.8px" width="22" height="22" viewBox="0 0 24 24"><path fill="#6c868e" d="M12 8c1.100 0 2-.900 2-2s-.900-2-2-2-2 .900-2 2 .900 2 2 2zm0 2c-1.100 0-2 .900-2 2s.900 2 2 2 2-.900 2-2-.900-2-2-2zm0 6c-1.100 0-2 .900-2 2s.900 2 2 2 2-.900 2-2-.900-2-2-2z"/></svg>
<div style="left:239px;top:727px;width:1633px;height:1px;background:#bbcdd2"></div>
<div style="left:245px;top:687px;width:19.5px;height:19.5px;border:2px solid #b3c7cd;border-radius:3px;background:#fff"></div>
<span class="t" style="left:286.20px;top:690px;font-size:13.3px;color:#363a41;letter-spacing:-0.120px;">1187</span>
<div style="left:366px;top:674px;width:47px;height:47px;border:1px solid #bbcdd2;border-radius:4px;background:#fff;overflow:hidden"><svg style="left:0;top:0" width="45" height="45" viewBox="0 0 45 45"><defs><linearGradient id="g6" x1="0" x2="1"><stop offset="0" stop-color="#dfe1e4"/><stop offset="0.300" stop-color="#f7f8f9"/><stop offset="1" stop-color="#e4e6e9"/></linearGradient></defs>
<rect x="14.800" y="6.600" width="14.700" height="31.200" rx="3.200" fill="url(#g6)"/>
<rect x="19.500" y="12.300" width="4.500" height="0.900" fill="#9da2a8"/>
<path d="M22 17.100c2 0 3.100 4.500 3.100 6.500 0 1.200-1.400 1.600-3.100 1.600s-3.100-.400-3.100-1.600c0-2 1.100-6.500 3.100-6.500z" fill="#8b8e93"/>
<ellipse cx="22.100" cy="33.600" rx="5.900" ry="4.200" fill="#6f7276"/><ellipse cx="22.100" cy="32.600" rx="4.300" ry="2.500" fill="#85888d"/></svg></div>
<span class="t" style="left:448.90px;top:690px;font-size:13.3px;color:#25b9d7;">Dispensador Jabón de espuma, Plástico ABS 1000ml</span>
<span class="t" style="left:819.50px;top:690px;font-size:13.3px;color:#363a41;letter-spacing:-0.120px;">2113</span>
<span class="t" style="left:966.60px;top:690px;font-size:13.3px;color:#363a41;letter-spacing:0.028px;">Dispensadores de Jabón</span>
<span class="t" style="left:1214.14px;top:690px;font-size:13.3px;color:#25b9d7;letter-spacing:-0.120px;">12.637 $</span>
<span class="t" style="left:1361.04px;top:690px;font-size:13.3px;color:#25b9d7;letter-spacing:-0.120px;">15.038 $</span>
<span class="t" style="left:1520.07px;top:690px;font-size:13.3px;color:#25b9d7;letter-spacing:-0.120px;">-559</span>
<div style="left:1649px;top:689px;width:30px;height:15.5px;background:#70b580;border-radius:8px"></div>
<div style="left:1665.5px;top:691px;width:11.5px;height:11.5px;background:#fff;border-radius:6px"></div>
<svg style="left:1777.2px;top:685.6px" width="21.3" height="21.3" viewBox="0 0 24 24"><path fill="#6c868e" d="M3 17.250V21h3.750L17.810 9.940l-3.750-3.750L3 17.250zM20.710 7.040c.390-.390.390-1.020 0-1.410l-2.340-2.340c-.390-.390-1.020-.390-1.410 0l-1.830 1.830 3.750 3.750 1.830-1.830z"/></svg>
<svg style="left:1829.3px;top:687.8px" width="22" height="22" viewBox="0 0 24 24"><path fill="#6c868e" d="M12 8c1.100 0 2-.900 2-2s-.900-2-2-2-2 .900-2 2 .900 2 2 2zm0 2c-1.100 0-2 .900-2 2s.900 2 2 2 2-.900 2-2-.900-2-2-2zm0 6c-1.100 0-2 .900-2 2s.900 2 2 2 2-.900 2-2-.900-2-2-2z"/></svg>
<div style="left:239px;top:788px;width:1633px;height:1px;background:#bbcdd2"></div>
<div style="left:245px;top:748px;width:19.5px;height:19.5px;border:2px solid #b3c7cd;border-radius:3px;background:#fff"></div>
<span class="t" style="left:287.20px;top:751px;font-size:13.3px;color:#363a41;letter-spacing:-0.120px;">805</span>
<div style="left:366px;top:734px;width:47px;height:47px;border:1px solid #bbcdd2;border-radius:4px;background:#fff;overflow:hidden"><svg style="left:0;top:0" width="45" height="45" viewBox="0 0 45 45"><defs><linearGradient id="g7" x1="0" x2="1"><stop offset="0" stop-color="#8e8e90"/><stop offset="0.250" stop-color="#c9c9cb"/><stop offset="0.700" stop-color="#b1b1b3"/><stop offset="0.860" stop-color="#8a8a8c"/><stop offset="1" stop-color="#3c3c3f"/></linearGradient></defs>
<rect x="12.900" y="7.400" width="19.100" height="30" rx="1.200" fill="url(#g7)"/>
<rect x="12.900" y="34.500" width="19.100" height="2.900" fill="#77777a" opacity="0.700"/>
<rect x="17.500" y="12.500" width="7" height="0.800" fill="#7d7d80"/>
<circle cx="19.600" cy="27" r="1.500" fill="#2d2d30"/><rect x="18.900" y="27" width="1.600" height="5.500" fill="#3a3a3d"/><rect x="16" y="32" width="6" height="2.300" rx="1" fill="#e9e9eb"/></svg></div>
<span class="t" style="left:448.90px;top:751px;font-size:13.3px;color:#25b9d7;letter-spacing:0.116px;">Dispensador de Jabón 800 ml Acero Inoxidable</span>
<span class="t" style="left:819.50px;top:751px;font-size:13.3px;color:#363a41;letter-spacing:-0.120px;">2109</span>
<span class="t" style="left:966.60px;top:751px;font-size:13.3px;color:#363a41;letter-spacing:0.028px;">Dispensadores de Jabón</span>
<span class="t" style="left:1214.14px;top:751px;font-size:13.3px;color:#25b9d7;letter-spacing:-0.120px;">19.701 $</span>
<span class="t" style="left:1361.54px;top:751px;font-size:13.3px;color:#25b9d7;letter-spacing:-0.120px;">23.444 $</span>
<span class="t" style="left:1520.07px;top:751px;font-size:13.3px;color:#25b9d7;letter-spacing:-0.120px;">-521</span>
<div style="left:1649px;top:750px;width:30px;height:15.5px;background:#70b580;border-radius:8px"></div>
<div style="left:1665.5px;top:752px;width:11.5px;height:11.5px;background:#fff;border-radius:6px"></div>
<svg style="left:1777.2px;top:746.6px" width="21.3" height="21.3" viewBox="0 0 24 24"><path fill="#6c868e" d="M3 17.250V21h3.750L17.810 9.940l-3.750-3.750L3 17.250zM20.710 7.040c.390-.390.390-1.020 0-1.410l-2.340-2.340c-.390-.390-1.020-.390-1.410 0l-1.830 1.830 3.750 3.750 1.830-1.830z"/></svg>
<svg style="left:1829.3px;top:748.8px" width="22" height="22" viewBox="0 0 24 24"><path fill="#6c868e" d="M12 8c1.100 0 2-.900 2-2s-.900-2-2-2-2 .900-2 2 .900 2 2 2zm0 2c-1.100 0-2 .900-2 2s.900 2 2 2 2-.900 2-2-.900-2-2-2zm0 6c-1.100 0-2 .900-2 2s.900 2 2 2 2-.900 2-2-.900-2-2-2z"/></svg>
<div style="left:239px;top:848px;width:1633px;height:1px;background:#bbcdd2"></div>
<div style="left:245px;top:809px;width:19.5px;height:19.5px;border:2px solid #b3c7cd;border-radius:3px;background:#fff"></div>
<span class="t" style="left:287.20px;top:812px;font-size:13.3px;color:#363a41;letter-spacing:-0.120px;">608</span>
<div style="left:366px;top:795px;width:47px;height:47px;border:1px solid #bbcdd2;border-radius:4px;background:#fff;overflow:hidden"><svg style="left:0;top:0" width="45" height="45" viewBox="0 0 45 45"><defs><radialGradient id="g8" cx="0.350" cy="0.400" r="0.700"><stop offset="0" stop-color="#ffffff"/><stop offset="0.600" stop-color="#e3e4e6"/><stop offset="1" stop-color="#b9babd"/></radialGradient></defs>
<circle cx="24.500" cy="21.800" r="17.200" fill="#3a3b3e"/>
<path d="M30 6.500c7 3 11 9 11 16 0 6-3 11-8 14.500 2-4 3-9 3-14 0-7-2-12-6-16.500z" fill="#9c9da0"/>
<circle cx="20.800" cy="22.600" r="16.400" fill="url(#g8)"/>
<rect x="15" y="12.200" width="6.500" height="0.900" fill="#a3a5a8"/>
<rect x="17.200" y="18.500" width="1.800" height="5" rx="0.900" fill="#b5b7ba"/>
<rect x="17.300" y="24.500" width="1.500" height="9" rx="0.700" fill="#a9abae"/><rect x="16.200" y="25.600" width="3.800" height="1" fill="#7b7d81"/>
<path d="M11 37.500h21l-1.500 2.300h-18z" fill="#8e9094"/></svg></div>
<span class="t" style="left:448.90px;top:812px;font-size:13.3px;color:#25b9d7;letter-spacing:0.114px;">Dispensador Papel Higiénico Jumbo Acero Inoxidable</span>
<span class="t" style="left:819.50px;top:812px;font-size:13.3px;color:#363a41;letter-spacing:-0.120px;">2302</span>
<span class="t" style="left:966.60px;top:812px;font-size:13.3px;color:#363a41;letter-spacing:0.075px;">Dispensadores de Papel</span>
<span class="t" style="left:1214.64px;top:812px;font-size:13.3px;color:#25b9d7;letter-spacing:-0.120px;">24.560 $</span>
<span class="t" style="left:1361.54px;top:812px;font-size:13.3px;color:#25b9d7;letter-spacing:-0.120px;">29.226 $</span>
<span class="t" style="left:1520.07px;top:812px;font-size:13.3px;color:#25b9d7;letter-spacing:-0.120px;">-357</span>
<div style="left:1649px;top:811px;width:30px;height:15.5px;background:#70b580;border-radius:8px"></div>
<div style="left:1665.5px;top:813px;width:11.5px;height:11.5px;background:#fff;border-radius:6px"></div>
<svg style="left:1777.2px;top:807.6px" width="21.3" height="21.3" viewBox="0 0 24 24"><path fill="#6c868e" d="M3 17.250V21h3.750L17.810 9.940l-3.750-3.750L3 17.250zM20.710 7.040c.390-.390.390-1.020 0-1.410l-2.340-2.340c-.390-.390-1.020-.390-1.410 0l-1.830 1.830 3.750 3.750 1.830-1.830z"/></svg>
<svg style="left:1829.3px;top:809.8px" width="22" height="22" viewBox="0 0 24 24"><path fill="#6c868e" d="M12 8c1.100 0 2-.900 2-2s-.900-2-2-2-2 .900-2 2 .900 2 2 2zm0 2c-1.100 0-2 .900-2 2s.900 2 2 2 2-.900 2-2-.900-2-2-2zm0 6c-1.100 0-2 .900-2 2s.900 2 2 2 2-.900 2-2-.900-2-2-2z"/></svg>
<div style="left:239px;top:909px;width:1633px;height:1px;background:#bbcdd2"></div>
<div style="left:245px;top:869px;width:19.5px;height:19.5px;border:2px solid #b3c7cd;border-radius:3px;background:#fff"></div>
<span class="t" style="left:286.20px;top:872px;font-size:13.3px;color:#363a41;letter-spacing:-0.120px;">1098</span>
<div style="left:366px;top:856px;width:47px;height:47px;border:1px solid #bbcdd2;border-radius:4px;background:#fff;overflow:hidden"><svg style="left:0;top:0" width="45" height="45" viewBox="0 0 45 45"><rect x="15.400" y="11.200" width="13.400" height="25.400" rx="1.300" fill="#dcdde0"/>
<rect x="20" y="10.300" width="3.500" height="1.300" fill="#a5a7aa"/>
<rect x="15.400" y="13" width="7" height="21.500" fill="#17181b"/>
<rect x="17" y="14" width="1.300" height="5.500" fill="#e8e9ea"/><rect x="19.300" y="14" width="1.300" height="5.500" fill="#e8e9ea"/><rect x="17" y="21.500" width="1.300" height="5" fill="#e8e9ea"/><rect x="19.300" y="21.500" width="1.300" height="5" fill="#e8e9ea"/><rect x="17" y="28.500" width="3.600" height="1.300" fill="#cfd0d2"/>
<rect x="23.600" y="14.500" width="4.200" height="3" fill="#2b2c30"/><rect x="23.600" y="19" width="4.200" height="3.200" fill="#4b4c50"/><rect x="23.600" y="23.600" width="4.200" height="3" fill="#2b2c30"/><rect x="23.600" y="28" width="4.200" height="4" fill="#3b3c40"/>
<rect x="15.400" y="34.500" width="13.400" height="2.100" rx="1" fill="#9b9da0"/></svg></div>
<span class="t" style="left:448.90px;top:872px;font-size:13.3px;color:#25b9d7;">Pila D Para Aromatizador API Sony</span>
<span class="t" style="left:818.50px;top:872px;font-size:13.3px;color:#363a41;letter-spacing:-0.120px;">1334</span>
<span class="t" style="left:966.60px;top:872px;font-size:13.3px;color:#363a41;letter-spacing:0.531px;">Inicio</span>
<span class="t" style="left:1223.70px;top:872px;font-size:13.3px;color:#25b9d7;letter-spacing:-0.120px;">757 $</span>
<span class="t" style="left:1370.60px;top:872px;font-size:13.3px;color:#25b9d7;letter-spacing:-0.120px;">901 $</span>
<span class="t" style="left:1520.07px;top:872px;font-size:13.3px;color:#25b9d7;letter-spacing:-0.120px;">-355</span>
<div style="left:1649px;top:871px;width:30px;height:15.5px;background:#70b580;border-radius:8px"></div>
<div style="left:1665.5px;top:873px;width:11.5px;height:11.5px;background:#fff;border-radius:6px"></div>
<svg style="left:1777.2px;top:867.6px" width="21.3" height="21.3" viewBox="0 0 24 24"><path fill="#6c868e" d="M3 17.250V21h3.750L17.810 9.940l-3.750-3.750L3 17.250zM20.710 7.040c.390-.390.390-1.020 0-1.410l-2.340-2.340c-.390-.390-1.020-.390-1.410 0l-1.830 1.830 3.750 3.750 1.830-1.830z"/></svg>
<svg style="left:1829.3px;top:869.8px" width="22" height="22" viewBox="0 0 24 24"><path fill="#6c868e" d="M12 8c1.100 0 2-.900 2-2s-.900-2-2-2-2 .900-2 2 .900 2 2 2zm0 2c-1.100 0-2 .900-2 2s.900 2 2 2 2-.900 2-2-.900-2-2-2zm0 6c-1.100 0-2 .900-2 2s.900 2 2 2 2-.900 2-2-.900-2-2-2z"/></svg>
<div style="left:245px;top:930px;width:19.5px;height:19.5px;border:2px solid #b3c7cd;border-radius:3px;background:#fff"></div>
<span class="t" style="left:286.20px;top:933px;font-size:13.3px;color:#363a41;letter-spacing:-0.120px;">1560</span>
<div style="left:366px;top:917px;width:47px;height:47px;border:1px solid #bbcdd2;border-radius:4px;background:#fff;overflow:hidden"><svg style="left:0;top:0" width="45" height="45" viewBox="0 0 45 45"><defs><linearGradient id="g10" x1="0" y1="0" x2="1" y2="1"><stop offset="0" stop-color="#e4e5e7"/><stop offset="0.550" stop-color="#c9cacd"/><stop offset="1" stop-color="#b4b5b8"/></linearGradient></defs>
<path d="M11.300 16.900L14.400 8.200M9.500 16.500L13 8.500M34.700 16.900L39.700 5.800M37.500 18L40.200 6.200" stroke="#c9cacc" stroke-width="0.900" fill="none"/>
<path d="M5.800 17.500c5 1 9 2 13.500 1.500 5.500-.600 10-2 15.500-2.800 1 6-1 12-5 17-2.500 3-6.500 5.500-10 5.500-4 0-7-3.500-9.500-8-2.300-4.300-3.800-9-4.500-13.200z" fill="url(#g10)"/>
<path d="M9 25c6 1.500 14 0 24-5M11 29.500c6 1.500 12 0 20.500-4.500M13.500 33.500c5 1 10-.500 15.500-4" stroke="#aeb0b3" stroke-width="0.700" fill="none" opacity="0.800"/></svg></div>
<span class="t" style="left:448.90px;top:933px;font-size:13.3px;color:#25b9d7;letter-spacing:-0.005px;">Mascarilla 3 Pliegues Blanca Caja 50 unidades</span>
<span class="t" style="left:819.50px;top:933px;font-size:13.3px;color:#363a41;letter-spacing:-0.120px;">5023</span>
<span class="t" style="left:966.60px;top:933px;font-size:13.3px;color:#363a41;letter-spacing:0.531px;">Inicio</span>
<span class="t" style="left:1218.28px;top:933px;font-size:13.3px;color:#25b9d7;letter-spacing:-0.120px;">2.410 $</span>
<span class="t" style="left:1365.18px;top:933px;font-size:13.3px;color:#25b9d7;letter-spacing:-0.120px;">2.868 $</span>
<span class="t" style="left:1520.07px;top:933px;font-size:13.3px;color:#25b9d7;letter-spacing:-0.120px;">-340</span>
<div style="left:1649px;top:932px;width:30px;height:15.5px;background:#70b580;border-radius:8px"></div>
<div style="left:1665.5px;top:934px;width:11.5px;height:11.5px;background:#fff;border-radius:6px"></div>
<svg style="left:1777.2px;top:928.6px" width="21.3" height="21.3" viewBox="0 0 24 24"><path fill="#6c868e" d="M3 17.250V21h3.750L17.810 9.940l-3.750-3.750L3 17.250zM20.710 7.040c.390-.390.390-1.020 0-1.410l-2.340-2.340c-.390-.390-1.020-.390-1.410 0l-1.830 1.830 3.750 3.750 1.830-1.830z"/></svg>
<svg style="left:1829.3px;top:930.8px" width="22" height="22" viewBox="0 0 24 24"><path fill="#6c868e" d="M12 8c1.100 0 2-.900 2-2s-.900-2-2-2-2 .900-2 2 .900 2 2 2zm0 2c-1.100 0-2 .900-2 2s.900 2 2 2 2-.900 2-2-.900-2-2-2zm0 6c-1.100 0-2 .900-2 2s.900 2 2 2 2-.900 2-2-.900-2-2-2z"/></svg>
<span class="t" style="left:743.20px;top:33px;font-size:21.3px;color:#fe0000;letter-spacing:-1.320px;will-change:transform;">CONTENEDOR DE OTRO COLOR</span>
<span class="t" style="left:1310.20px;top:70px;font-size:21.3px;color:#fe0000;letter-spacing:-1.023px;will-change:transform;">NO FUNCIONA ESTE BOTÓN</span>
<div style="left:241px;top:260px;width:201.5px;height:92px;border:3px solid #fe0000;border-radius:2.500px"></div>
<div style="left:1167px;top:258px;width:155px;height:98px;border:3px solid #fe0000;border-radius:2.500px"></div>
<div style="left:1456px;top:259px;width:146px;height:93px;border:3px solid #fe0000;border-radius:2.500px"></div>
<div style="left:213px;top:125px;width:1698px;height:842px;border:7px solid #fe0000;border-radius:4px"></div>
<svg style="left:0;top:0" width="1916" height="974" viewBox="0 0 1916 974"><polygon fill="#fe0000" points="846.8,79.8 866.3,72.9 867.9,108.7"/><path d="M1628 110L1732 277.500" stroke="#fe0000" stroke-width="7" stroke-linecap="round" fill="none"/><polygon fill="#fe0000" points="1749.3,305 1722.8,282.5 1740.6,271.4"/></svg>
</div></body></html>
